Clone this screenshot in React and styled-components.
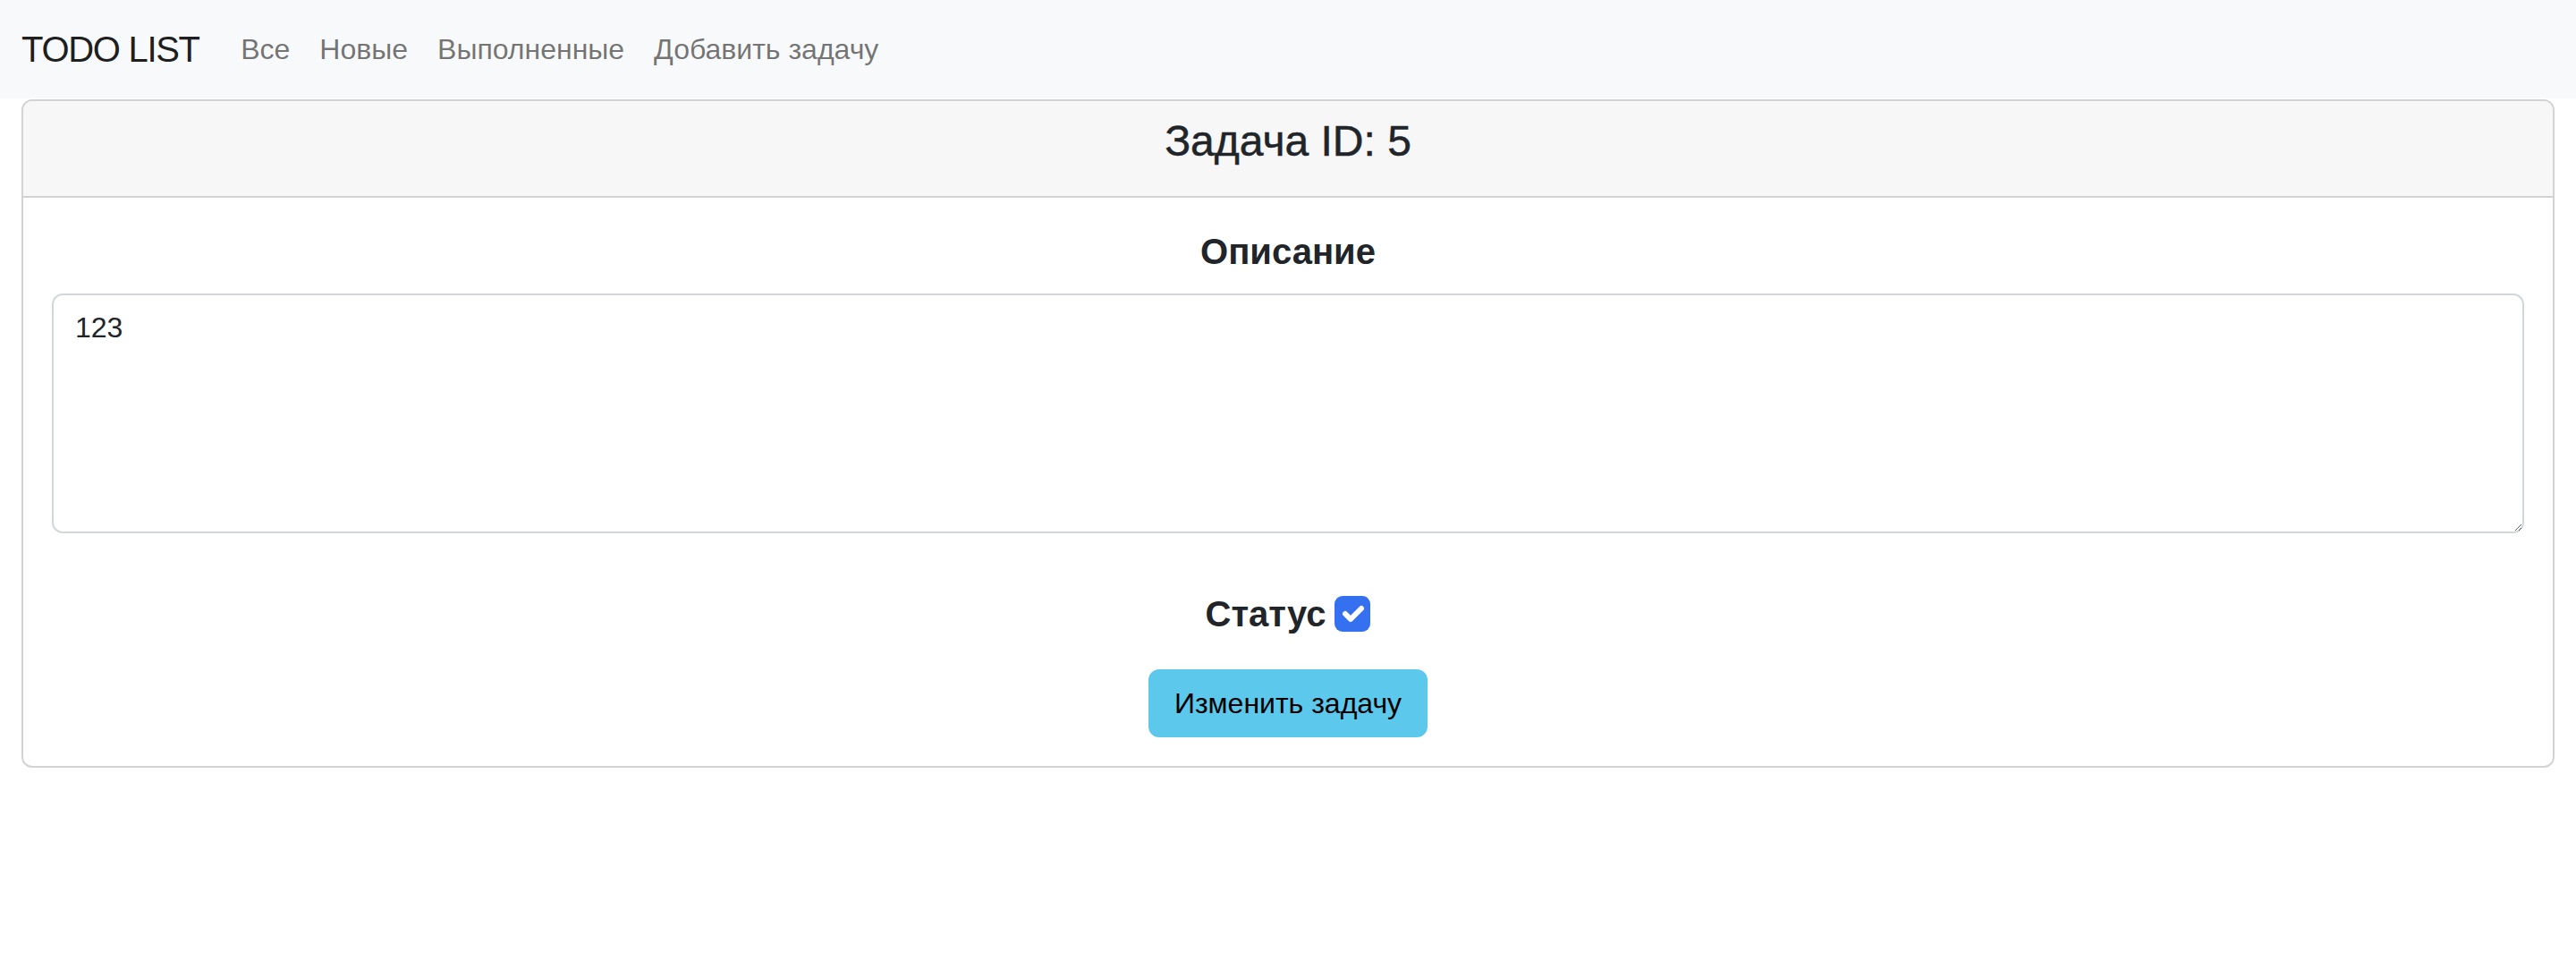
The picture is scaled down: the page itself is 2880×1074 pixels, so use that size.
import styled, {createGlobalStyle} from "styled-components";

const GlobalStyle = createGlobalStyle`
  body {
    margin: 0;
    background: #fff;
    font-family: "Liberation Sans", Arial, sans-serif;
    color: #212529;
  }
`;

const Navbar = styled.nav`
  display: flex;
  align-items: center;
  height: 110px;
  padding: 0 24px;
  background: #f8f9fa;
`;

const Brand = styled.span`
  font-size: 40px;
  line-height: 60px;
  letter-spacing: -1.3px;
  color: rgba(0, 0, 0, 0.9);
  margin-right: 30px;
`;

const NavLink = styled.a`
  font-size: 32px;
  line-height: 48px;
  padding: 16px 16.5px;
  color: rgba(0, 0, 0, 0.55);
  text-decoration: none;
`;

const Container = styled.main`
  padding: 1px 24px 0;
`;

const Card = styled.section`
  border: 2px solid #d3d3d3;
  border-radius: 12px;
  overflow: hidden;
`;

const CardHeader = styled.header`
  padding: 16px 32px;
  background: #f7f7f7;
  border-bottom: 2px solid #d3d3d3;
  text-align: center;
`;

const Title = styled.h4`
  margin: 0 0 16px;
  font-size: 48px;
  line-height: 57.6px;
  font-weight: 500;
  -webkit-text-stroke: 0.5px #212529;
`;

const CardBody = styled.form`
  display: flex;
  flex-direction: column;
  align-items: center;
  padding: 32px;
`;

const Label = styled.h5`
  margin: ${({$top}) => $top}px 0 ${({$bottom}) => $bottom}px;
  font-size: 40px;
  line-height: 48px;
  font-weight: 700;
  display: flex;
  align-items: center;
  gap: 10px;
`;

const TextArea = styled.textarea`
  box-sizing: border-box;
  width: 100%;
  padding: 12px 24px;
  font-family: "Liberation Sans", Arial, sans-serif;
  font-size: 32px;
  line-height: 48px;
  color: #212529;
  border: 2px solid #d3d7dc;
  border-radius: 12px;
  outline: none;
`;

const CheckBox = styled.span`
  display: inline-flex;
  align-items: center;
  justify-content: center;
  width: 40px;
  height: 40px;
  border-radius: 9px;
  background: ${({$checked}) => ($checked ? "#3470f0" : "#fff")};
`;

const Button = styled.button`
  padding: 12px 27px;
  font-family: "Liberation Sans", Arial, sans-serif;
  font-size: 32px;
  line-height: 48px;
  color: #000;
  background: #5bc8ec;
  border: 2px solid #5bc8ec;
  border-radius: 12px;
`;

function App() {
  const task = {id: 5, description: "123", done: true};

  return (
    <>
      <GlobalStyle/>
      <Navbar>
        <Brand>TODO LIST</Brand>
        <NavLink href="#">Все</NavLink>
        <NavLink href="#">Новые</NavLink>
        <NavLink href="#">Выполненные</NavLink>
        <NavLink href="#">Добавить задачу</NavLink>
      </Navbar>
      <Container>
        <Card>
          <CardHeader>
            <Title>Задача ID: {task.id}</Title>
          </CardHeader>
          <CardBody onSubmit={e => e.preventDefault()}>
            <Label $top={4} $bottom={23}>Описание</Label>
            <TextArea rows={5} defaultValue={task.description}/>
            <Label $top={66} $bottom={38}>
              Статус
              <CheckBox $checked={task.done}>
                <svg width="40" height="40" viewBox="0 0 20 20">
                  <path d="m6 10 3 3 6-6" fill="none" stroke="#fff" strokeWidth="3"
                        strokeLinecap="round" strokeLinejoin="round"/>
                </svg>
              </CheckBox>
            </Label>
            <Button type="submit">Изменить задачу</Button>
          </CardBody>
        </Card>
      </Container>
    </>
  );
}

export default App;
